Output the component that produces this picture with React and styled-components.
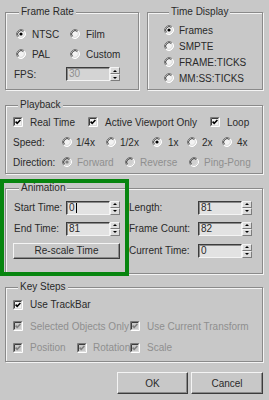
import React from "react";
import styled, { createGlobalStyle } from "styled-components";

const Global = createGlobalStyle`
    body {
        margin: 0;
        background: #c8c8c8;
    }
`

function Radio({ checked, disabled }) {
    return (
        <svg width="10" height="10" viewBox="0 0 10 10" style={{ flex: "none" }}>
            <circle cx="5" cy="5" r="4.5" fill={disabled ? "#cfcfcf" : "#f2f2f2"} />
            <path d="M1.82 8.18 A4.5 4.5 0 0 1 8.18 1.82" stroke="#7c7c7c" fill="none" />
            <path d="M8.18 1.82 A4.5 4.5 0 0 1 1.82 8.18" stroke="#ffffff" fill="none" />
            <path d="M2.53 7.47 A3.5 3.5 0 0 1 7.47 2.53" stroke="#3c3c3c" fill="none" />
            <path d="M7.47 2.53 A3.5 3.5 0 0 1 2.53 7.47" stroke="#dcdcdc" fill="none" />
            {checked && <circle cx="5" cy="5" r="1.6" fill={disabled ? "#808080" : "#000"} />}
        </svg>
    )
}

function Check({ checked, disabled }) {
    return (
        <svg width="10" height="10" viewBox="0 0 10 10" style={{ flex: "none" }}>
            <rect x="1" y="1" width="8" height="8" fill={disabled ? "#c8c8c8" : "#f2f2f2"} />
            <path d="M0.5 9.5 V0.5 H9.5" stroke="#7c7c7c" fill="none" />
            <path d="M0.5 9.5 H9.5 V0.5" stroke="#ffffff" fill="none" />
            <path d="M1.5 8.5 V1.5 H8.5" stroke="#3c3c3c" fill="none" />
            <path d="M1.5 8.5 H8.5 V1.5" stroke="#dcdcdc" fill="none" />
            {checked && (
                <path d="M2.6 4.6 L4.2 6.3 L7.4 3" stroke={disabled ? "#808080" : "#000"} strokeWidth="1.6" fill="none" />
            )}
        </svg>
    )
}

function Spin({ value, caret, disabled }) {
    return (
        <SpinBox>
            <Field $disabled={disabled}>
                {value}
                {caret && <Caret />}
            </Field>
            <Arrows>
                <ArrowBtn $up />
                <ArrowBtn />
            </Arrows>
        </SpinBox>
    )
}

export default function App() {
    return (
        <Page>
            <Global />
            <TopRow>
                <Group $h={84} $pad="6px 0 0 8px">
                    <Legend>Frame Rate</Legend>
                    <Row $pl={2}>
                        <Option $w={54} $gap={6}><Radio checked />NTSC</Option>
                        <Option $gap={6}><Radio />Film</Option>
                    </Row>
                    <Row $pl={2}>
                        <Option $w={54} $gap={6}><Radio />PAL</Option>
                        <Option $gap={6}><Radio />Custom</Option>
                    </Row>
                    <Row>
                        <RowLabel $w={52}>FPS:</RowLabel>
                        <Spin value="30" disabled />
                    </Row>
                </Group>
                <Group $h={84} $pad="4px 0 0 16px">
                    <Legend>Time Display</Legend>
                    <Row $h={16}><Option $gap={5}><Radio checked />Frames</Option></Row>
                    <Row $h={16}><Option $gap={5}><Radio />SMPTE</Option></Row>
                    <Row $h={16}><Option $gap={5}><Radio />FRAME:TICKS</Option></Row>
                    <Row $h={16}><Option $gap={5}><Radio />MM:SS:TICKS</Option></Row>
                </Group>
            </TopRow>

            <Group $mt={9} $h={75} $pad="1px 0 0 7px">
                <Legend>Playback</Legend>
                <Row>
                    <Option $w={75}><Check checked />Real Time</Option>
                    <Option $w={122}><Check checked />Active Viewport Only</Option>
                    <Option><Check checked />Loop</Option>
                </Row>
                <Row>
                    <RowLabel $w={49}>Speed:</RowLabel>
                    <Option $w={44} $gap={4}><Radio />1/4x</Option>
                    <Option $w={46} $gap={4}><Radio />1/2x</Option>
                    <Option $w={35} $gap={6}><Radio checked />1x</Option>
                    <Option $w={35} $gap={5}><Radio />2x</Option>
                    <Option $gap={5}><Radio />4x</Option>
                </Row>
                <Row>
                    <RowLabel $w={49}>Direction:</RowLabel>
                    <Option $w={63} $gap={5} $disabled><Radio checked disabled />Forward</Option>
                    <Option $w={64} $gap={5} $disabled><Radio disabled />Reverse</Option>
                    <Option $gap={5} $disabled><Radio disabled />Ping-Pong</Option>
                </Row>
            </Group>

            <AnimationArea>
                <Group $h={92} $pad="3px 0 0 8px">
                    <Legend>Animation</Legend>
                    <AnimGrid>
                        <Row $h={21}>
                            <RowLabel $w={52}>Start Time:</RowLabel>
                            <Spin value="0" caret />
                        </Row>
                        <Row $h={21}>
                            <RowLabel $w={69}>Length:</RowLabel>
                            <Spin value="81" />
                        </Row>
                        <Row $h={21}>
                            <RowLabel $w={52}>End Time:</RowLabel>
                            <Spin value="81" />
                        </Row>
                        <Row $h={21}>
                            <RowLabel $w={69}>Frame Count:</RowLabel>
                            <Spin value="82" />
                        </Row>
                        <Row $h={23}>
                            <Button $w={107} $h={16} $ml={-1}>Re-scale Time</Button>
                        </Row>
                        <Row $h={23}>
                            <RowLabel $w={69}>Current Time:</RowLabel>
                            <Spin value="0" />
                        </Row>
                    </AnimGrid>
                </Group>
                <Highlight />
            </AnimationArea>

            <Group $mt={7} $h={81} $pad="1px 0 0 7px">
                <Legend>Key Steps</Legend>
                <Row $h={21}>
                    <Option><Check checked />Use TrackBar</Option>
                </Row>
                <Row $h={22}>
                    <Option $w={117} $disabled><Check checked disabled />Selected Objects Only</Option>
                    <Option $disabled><Check checked disabled />Use Current Transform</Option>
                </Row>
                <Row $h={21}>
                    <Option $w={64} $disabled><Check checked disabled />Position</Option>
                    <Option $w={53} $gap={6} $disabled><Check checked disabled />Rotation</Option>
                    <Option $disabled><Check checked disabled />Scale</Option>
                </Row>
            </Group>

            <Buttons>
                <Button $w={71} $h={22}>OK</Button>
                <Button $w={72} $h={22}>Cancel</Button>
            </Buttons>
        </Page>
    )
}

const Page = styled.div`
    width: 269px;
    height: 400px;
    box-sizing: border-box;
    padding: 6px 6px 0 5px;
    background: #c8c8c8;
    display: flex;
    flex-direction: column;
    font-family: "Liberation Sans", Arial, sans-serif;
    font-size: 10px;
    color: #2a2a2a;
`

const TopRow = styled.div`
    display: grid;
    grid-template-columns: 134px 116px;
    column-gap: 8px;
`

const Group = styled.fieldset`
    margin: ${p => p.$mt ?? 0}px 0 0;
    padding: ${p => p.$pad};
    height: ${p => p.$h}px;
    box-sizing: border-box;
    min-width: 0;
    border: 1px solid #8a8a8a;
    box-shadow: inset 1px 1px 0 #f4f4f4, 1px 1px 0 #f4f4f4;
`

const Legend = styled.legend`
    margin-left: 5px;
    padding: 0 2px;
    line-height: 12px;
    font-size: 10px;
    background: #c8c8c8;
`

const Row = styled.div`
    display: flex;
    align-items: center;
    height: ${p => p.$h ?? 20}px;
    padding-left: ${p => p.$pl ?? 0}px;
`

const RowLabel = styled.span`
    width: ${p => p.$w}px;
    flex: none;
    white-space: nowrap;
`

const Option = styled.label`
    display: flex;
    align-items: center;
    gap: ${p => p.$gap ?? 7}px;
    width: ${p => (p.$w ? `${p.$w}px` : "auto")};
    flex: none;
    white-space: nowrap;
    color: ${p => (p.$disabled ? "#8f8f8f" : "#2a2a2a")};
`

const SpinBox = styled.div`
    display: flex;
    height: 14px;
`

const Field = styled.div`
    width: 44px;
    box-sizing: border-box;
    padding: 0 2px;
    display: flex;
    align-items: center;
    line-height: 12px;
    background: ${p => (p.$disabled ? "#d4d4d4" : "#e2e2e2")};
    color: ${p => (p.$disabled ? "#8f8f8f" : "#2a2a2a")};
    border-style: solid;
    border-width: 1px;
    border-color: #3c3c3c #f4f4f4 #f4f4f4 #3c3c3c;
    box-shadow: inset 1px 1px 0 #8a8a8a;
`

const Caret = styled.span`
    width: 1px;
    height: 10px;
    margin-left: 1px;
    background: #000;
`

const Arrows = styled.div`
    width: 10px;
    display: flex;
    flex-direction: column;
`

const ArrowBtn = styled.div`
    flex: 1;
    box-sizing: border-box;
    background: #dcdcdc;
    border-style: solid;
    border-width: 1px;
    border-color: #f4f4f4 #7c7c7c #7c7c7c #f4f4f4;
    display: flex;
    align-items: center;
    justify-content: center;

    &::after {
        content: "";
        border-left: 2px solid transparent;
        border-right: 2px solid transparent;
        ${p => (p.$up ? "border-bottom: 2px solid #000;" : "border-top: 2px solid #000;")}
    }
`

const AnimGrid = styled.div`
    display: grid;
    grid-template-columns: 106px 123px;
    column-gap: 9px;
`

const AnimationArea = styled.div`
    position: relative;
    margin-top: 8px;
`

const Highlight = styled.div`
    position: absolute;
    left: -5px;
    top: -3px;
    width: 129px;
    height: 97px;
    box-sizing: border-box;
    border: 4px solid #07850f;
    pointer-events: none;
`

const Button = styled.button`
    width: ${p => p.$w}px;
    height: ${p => p.$h}px;
    margin-left: ${p => p.$ml ?? 0}px;
    padding: 0;
    font-family: inherit;
    font-size: 10px;
    color: #2a2a2a;
    background: #c8c8c8;
    border-style: solid;
    border-width: 1px;
    border-color: #f4f4f4 #3c3c3c #3c3c3c #f4f4f4;
    box-shadow: inset -1px -1px 0 #8a8a8a;
`

const Buttons = styled.div`
    display: flex;
    justify-content: flex-end;
    gap: 3px;
    margin-top: 10px;
`
